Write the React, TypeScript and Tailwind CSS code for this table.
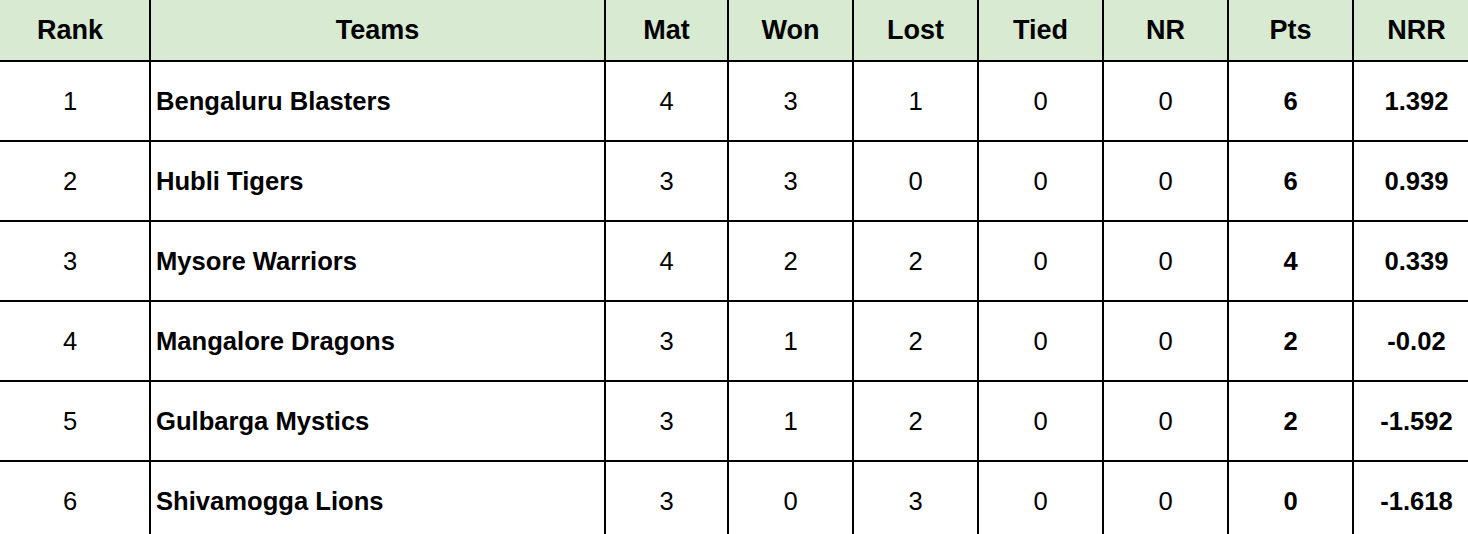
type Row = {
  rank: number;
  team: string;
  mat: number;
  won: number;
  lost: number;
  tied: number;
  nr: number;
  pts: number;
  nrr: string;
};

const rows: Row[] = [
  { rank: 1, team: "Bengaluru Blasters", mat: 4, won: 3, lost: 1, tied: 0, nr: 0, pts: 6, nrr: "1.392" },
  { rank: 2, team: "Hubli Tigers", mat: 3, won: 3, lost: 0, tied: 0, nr: 0, pts: 6, nrr: "0.939" },
  { rank: 3, team: "Mysore Warriors", mat: 4, won: 2, lost: 2, tied: 0, nr: 0, pts: 4, nrr: "0.339" },
  { rank: 4, team: "Mangalore Dragons", mat: 3, won: 1, lost: 2, tied: 0, nr: 0, pts: 2, nrr: "-0.02" },
  { rank: 5, team: "Gulbarga Mystics", mat: 3, won: 1, lost: 2, tied: 0, nr: 0, pts: 2, nrr: "-1.592" },
  { rank: 6, team: "Shivamogga Lions", mat: 3, won: 0, lost: 3, tied: 0, nr: 0, pts: 0, nrr: "-1.618" },
];

const headers = ["Rank", "Teams", "Mat", "Won", "Lost", "Tied", "NR", "Pts", "NRR"];

// column widths include the 2px right border
const grid = "grid grid-cols-[160px_455px_123px_125px_125px_125px_125px_125px_125px]";

export default function App() {
  return (
    <div className="w-[1468px] h-[534px] overflow-hidden bg-white font-['Liberation_Sans',Arial,sans-serif] text-black">
      <div className="-ml-[9px] w-[1488px]">
        <div className={`${grid} h-[62px] bg-[#d9ead3] text-[27px] font-bold`}>
          {headers.map((h, i) => (
            <div
              key={h}
              className={`flex items-center justify-center border-b-2 border-black ${i < headers.length - 1 ? "border-r-2" : ""}`}
            >
              {h}
            </div>
          ))}
        </div>

        {rows.map((r) => (
          <div key={r.rank} className={`${grid} h-[80px] text-[25.6px]`}>
            <div className="flex items-center justify-center border-r-2 border-b-2 border-black">{r.rank}</div>
            <div className="flex items-center pl-[5px] font-bold border-r-2 border-b-2 border-black">{r.team}</div>
            <div className="flex items-center justify-center border-r-2 border-b-2 border-black">{r.mat}</div>
            <div className="flex items-center justify-center border-r-2 border-b-2 border-black">{r.won}</div>
            <div className="flex items-center justify-center border-r-2 border-b-2 border-black">{r.lost}</div>
            <div className="flex items-center justify-center border-r-2 border-b-2 border-black">{r.tied}</div>
            <div className="flex items-center justify-center border-r-2 border-b-2 border-black">{r.nr}</div>
            <div className="flex items-center justify-center font-bold border-r-2 border-b-2 border-black">{r.pts}</div>
            <div className="flex items-center justify-center font-bold border-b-2 border-black">{r.nrr}</div>
          </div>
        ))}
      </div>
    </div>
  );
}
